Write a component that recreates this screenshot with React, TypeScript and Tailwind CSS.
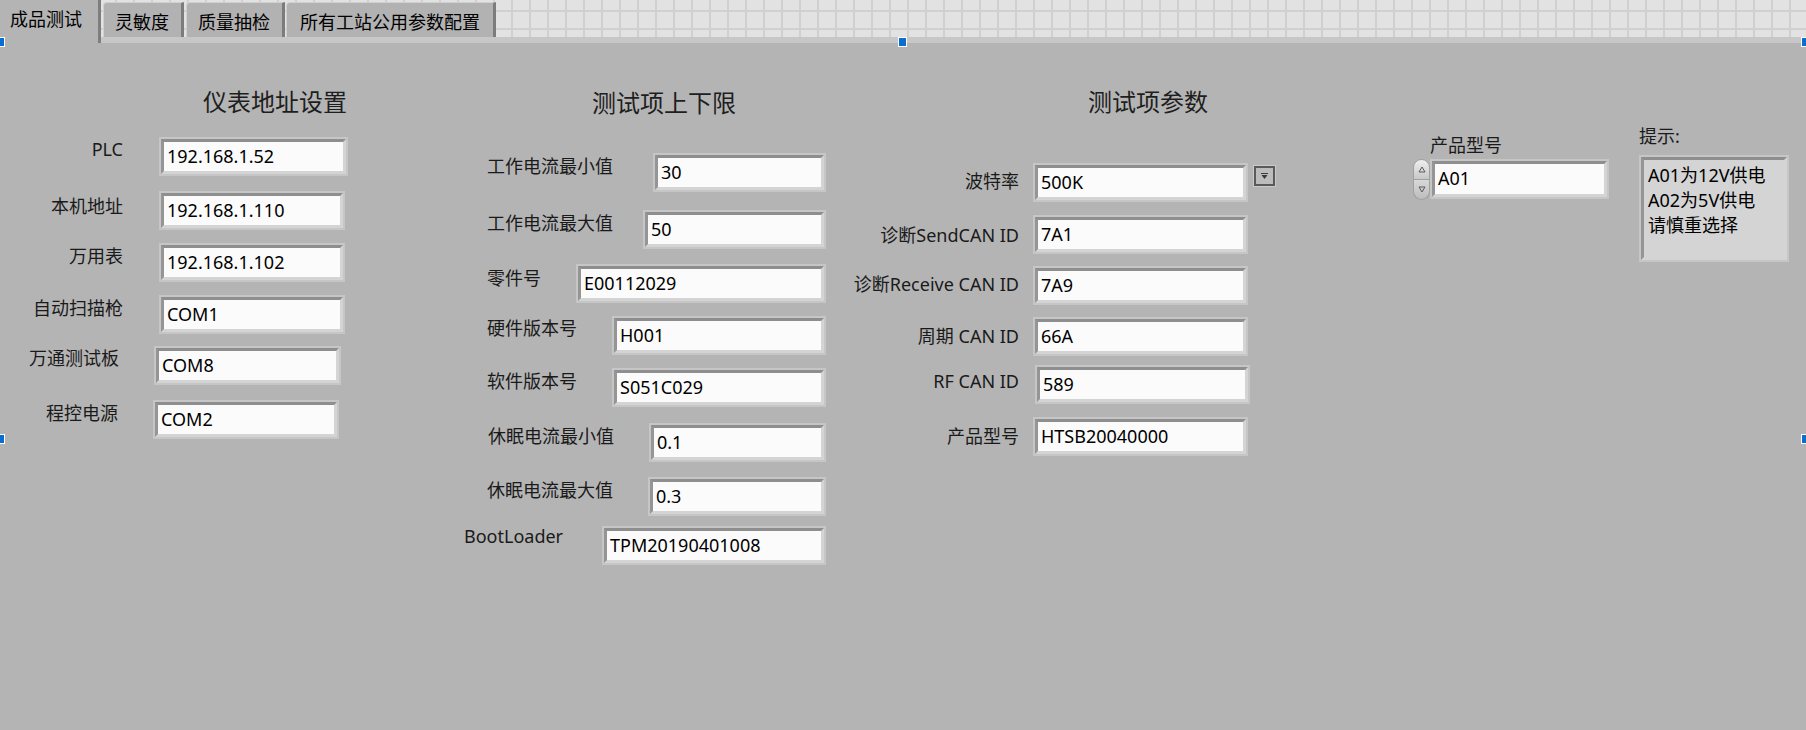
import React from "react";

type Row = {
  label: string;
  value: string;
  row: string;
  lab: string;
  frame: string;
};

const meters: Row[] = [
  { label: "PLC", value: "192.168.1.52", row: "mt-[23px]", lab: "w-[123px] mt-0", frame: "ml-[36px] w-[189px]" },
  { label: "本机地址", value: "192.168.1.110", row: "mt-[15px]", lab: "w-[123px] mt-[3px]", frame: "ml-[36px] w-[186px]" },
  { label: "万用表", value: "192.168.1.102", row: "mt-[13px]", lab: "w-[123px] mt-[1px]", frame: "ml-[36px] w-[186px]" },
  { label: "自动扫描枪", value: "COM1", row: "mt-[13px]", lab: "w-[123px] mt-[1px]", frame: "ml-[36px] w-[186px]" },
  { label: "万通测试板", value: "COM8", row: "mt-[12px]", lab: "w-[119px] mt-0", frame: "ml-[35px] w-[187px]" },
  { label: "程控电源", value: "COM2", row: "mt-[15px]", lab: "w-[118px] mt-[1px]", frame: "ml-[35px] w-[186px]" },
];

const limits: Row[] = [
  { label: "工作电流最小值", value: "30", row: "mt-[38px]", lab: "ml-[87px] mt-[1px]", frame: "w-[173px]" },
  { label: "工作电流最大值", value: "50", row: "mt-[18px]", lab: "ml-[87px] mt-[1px]", frame: "w-[183px]" },
  { label: "零件号", value: "E00112029", row: "mt-[15px]", lab: "ml-[87px] mt-[2px]", frame: "w-[250px]" },
  { label: "硬件版本号", value: "H001", row: "mt-[13px]", lab: "ml-[87px] mt-0", frame: "w-[214px]" },
  { label: "软件版本号", value: "S051C029", row: "mt-[13px]", lab: "ml-[87px] mt-[1px]", frame: "w-[214px]" },
  { label: "休眠电流最小值", value: "0.1", row: "mt-[16px]", lab: "ml-[88px] mt-[1px]", frame: "w-[177px]" },
  { label: "休眠电流最大值", value: "0.3", row: "mt-[15px]", lab: "ml-[87px] mt-[1px]", frame: "w-[178px]" },
  { label: "BootLoader", value: "TPM20190401008", row: "mt-[10px]", lab: "ml-[64px] -mt-[2px]", frame: "w-[224px]" },
];

const params: Row[] = [
  { label: "波特率", value: "500K", row: "mt-[49px]", lab: "mt-[6px]", frame: "ml-[14px]" },
  { label: "诊断SendCAN ID", value: "7A1", row: "mt-[13px]", lab: "mt-[8px]", frame: "ml-[14px]" },
  { label: "诊断Receive CAN ID", value: "7A9", row: "mt-[12px]", lab: "mt-[6px]", frame: "ml-[14px]" },
  { label: "周期 CAN ID", value: "66A", row: "mt-[12px]", lab: "mt-[7px]", frame: "ml-[14px]" },
  { label: "RF CAN ID", value: "589", row: "mt-[9px]", lab: "mt-[4px]", frame: "ml-[16px]" },
  { label: "产品型号", value: "HTSB20040000", row: "mt-[13px]", lab: "mt-[7px]", frame: "ml-[14px]" },
];

// LabVIEW style recessed frame
function Frame({
  className,
  inner = "bg-[#fbfbfb]",
  children,
}: {
  className: string;
  inner?: string;
  children?: React.ReactNode;
}) {
  return (
    <div className={`shrink-0 bg-[#c6c6c6] p-[2px] ${className}`}>
      <div
        className={`h-full border-[3px] border-t-[#8e8e8e] border-l-[#959595] border-r-[#d4d4d4] border-b-[#d4d4d4] ${inner}`}
      >
        {children}
      </div>
    </div>
  );
}

function Value({ children }: { children: React.ReactNode }) {
  return <div className="whitespace-nowrap px-[3px] leading-[29px] text-black">{children}</div>;
}

function Heading({ children, className }: { children: React.ReactNode; className: string }) {
  return <h2 className={`text-[24px] leading-[24px] text-[#1e1e1e] ${className}`}>{children}</h2>;
}

function DropButton() {
  return (
    <div className="ml-[5px] mt-[2px] h-[22px] w-[23px] shrink-0 bg-[#cacaca] p-[1px]">
      <div className="flex h-full w-full items-center justify-center border-2 border-[#5a5a5a] bg-[#bcbcbc]">
        <svg width="9" height="7" viewBox="0 0 9 7">
          <rect x="1" y="0" width="7" height="1" fill="#3a3a3a" />
          <path d="M1.5 2h6L4.5 6z" fill="#3a3a3a" />
        </svg>
      </div>
    </div>
  );
}

function Spinner() {
  return (
    <div className="ml-[13px] flex h-[41px] w-[17px] shrink-0 flex-col">
      <div className="flex h-1/2 items-center justify-center rounded-t-full border border-[#a0a0a0] bg-linear-to-b from-[#efefef] to-[#c8c8c8]">
        <svg width="8" height="7" viewBox="0 0 8 7">
          <path d="M4 1L7 6H1z" fill="none" stroke="#5a5a5a" strokeWidth="1" />
        </svg>
      </div>
      <div className="flex h-1/2 items-center justify-center rounded-b-full border border-t-0 border-[#a0a0a0] bg-linear-to-b from-[#d8d8d8] to-[#bdbdbd]">
        <svg width="8" height="7" viewBox="0 0 8 7">
          <path d="M4 6L7 1H1z" fill="none" stroke="#5a5a5a" strokeWidth="1" />
        </svg>
      </div>
    </div>
  );
}

function Handle({ className }: { className: string }) {
  return <div className={`absolute h-[10px] w-[9px] border border-white bg-[#0a6ed1] ${className}`} />;
}

export default function App() {
  return (
    <div className="relative h-[730px] w-[1806px] overflow-hidden bg-[#b4b4b4] text-[18px] text-[#1a1a1a] [font-family:'Noto_Sans','Noto_Sans_CJK_SC',sans-serif]">
      {/* tab strip over the editor grid */}
      <div className="relative z-10 flex h-[37px] items-start bg-[#e2e2e2] bg-[linear-gradient(to_right,#d0d0d0_2px,transparent_2px),linear-gradient(to_bottom,#d0d0d0_2px,transparent_2px)] [background-position:7px_10px] [background-size:18px_18px]">
        <div className="h-[43px] w-[101px] shrink-0 border-r-[3px] border-r-[#7e7e7e] bg-[#b4b4b4] pl-[10px] pt-[7px] leading-[24px] text-black">
          成品测试
        </div>
        <div className="ml-[2px] mt-[2px] h-[35px] w-[81px] shrink-0 rounded-tl-[4px] border-l border-t border-[#d0d0d0] border-r-[3px] border-r-[#7c7c7c] bg-[#b2b2b2] pl-[11px] pt-[7px] leading-[24px] text-black">
          灵敏度
        </div>
        <div className="ml-[2px] mt-[2px] h-[35px] w-[99px] shrink-0 rounded-tl-[4px] border-l border-t border-[#d0d0d0] border-r-[3px] border-r-[#7c7c7c] bg-[#b2b2b2] pl-[11px] pt-[7px] leading-[24px] text-black">
          质量抽检
        </div>
        <div className="ml-[1px] mt-[2px] h-[35px] w-[210px] shrink-0 rounded-tl-[4px] border-l border-t border-[#d0d0d0] border-r-[3px] border-r-[#7c7c7c] bg-[#b2b2b2] pl-[13px] pt-[7px] leading-[24px] text-black">
          所有工站公用参数配置
        </div>
      </div>
      <div className="h-[6px] bg-[#c7c7c7]" />

      <div className="flex">
        {/* 仪表地址设置 */}
        <section className="w-[400px] shrink-0">
          <Heading className="ml-[203px] mt-[47px]">仪表地址设置</Heading>
          {meters.map((r) => (
            <div key={r.label} className={`flex items-start ${r.row}`}>
              <div className={`shrink-0 whitespace-nowrap text-right leading-[24px] ${r.lab}`}>{r.label}</div>
              <Frame className={`h-[39px] ${r.frame}`}>
                <Value>{r.value}</Value>
              </Frame>
            </div>
          ))}
        </section>

        {/* 测试项上下限 */}
        <section className="w-[426px] shrink-0">
          <Heading className="ml-[192px] mt-[48px]">测试项上下限</Heading>
          {limits.map((r) => (
            <div key={r.label} className={`flex items-start ${r.row}`}>
              <div className={`shrink-0 whitespace-nowrap leading-[24px] ${r.lab}`}>{r.label}</div>
              <Frame className={`ml-auto h-[39px] ${r.frame}`}>
                <Value>{r.value}</Value>
              </Frame>
            </div>
          ))}
        </section>

        {/* 测试项参数 */}
        <section className="ml-[14px] w-[560px] shrink-0">
          <Heading className="ml-[248px] mt-[47px]">测试项参数</Heading>
          {params.map((r, i) => (
            <div key={r.label} className={`flex items-start ${r.row}`}>
              <div className={`w-[179px] shrink-0 whitespace-nowrap text-right leading-[24px] ${r.lab}`}>{r.label}</div>
              <Frame className={`h-[39px] w-[215px] ${r.frame}`}>
                <Value>{r.value}</Value>
              </Frame>
              {i === 0 && <DropButton />}
            </div>
          ))}
        </section>

        {/* 产品型号 + 提示 */}
        <section className="flex shrink-0">
          <div className="w-[239px] shrink-0">
            <div className="ml-[30px] mt-[90px] leading-[24px]">产品型号</div>
            <div className="mt-[2px] flex items-start">
              <Spinner />
              <Frame className="h-[40px] w-[179px]">
                <Value>A01</Value>
              </Frame>
            </div>
          </div>
          <div className="shrink-0">
            <div className="mt-[81px] leading-[24px]">提示:</div>
            <Frame className="mt-[7px] h-[107px] w-[150px]" inner="bg-[#d4d4d4]">
              <div className="pl-[4px] pt-[3px] leading-[25px] text-black">
                <div>A01为12V供电</div>
                <div>A02为5V供电</div>
                <div>请慎重选择</div>
              </div>
            </Frame>
          </div>
        </section>
      </div>

      {/* selection handles of the tab control */}
      <Handle className="-left-[4px] top-[37px] z-20" />
      <Handle className="left-[898px] top-[37px] z-20" />
      <Handle className="left-[1801px] top-[37px] z-20" />
      <Handle className="-left-[4px] top-[434px]" />
      <Handle className="left-[1801px] top-[434px]" />
    </div>
  );
}
